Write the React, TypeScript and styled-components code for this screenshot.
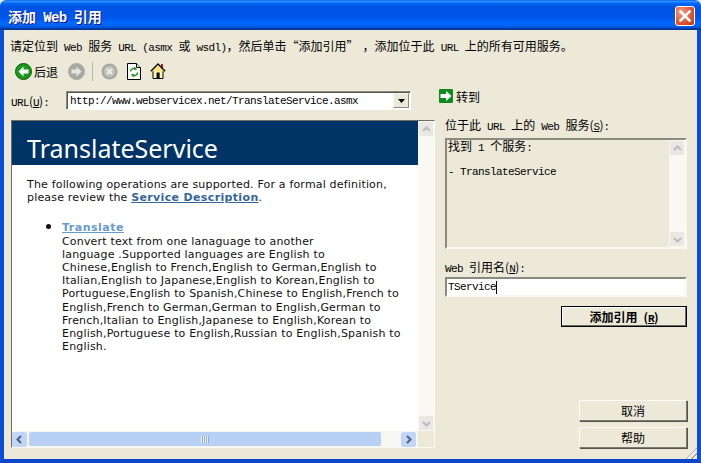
import styled, { createGlobalStyle } from "styled-components"

const GlobalStyle = createGlobalStyle`
    html, body {
        margin: 0;
        padding: 0;
        background: #ece9d8;
    }
    body {
        width: 701px;
        height: 463px;
        overflow: hidden;
        font-family: "Noto Sans CJK SC", "Liberation Sans", sans-serif;
        font-size: 12px;
        color: #000;
    }
`

export default function App() {
    return (
        <Window>
            <GlobalStyle />
            <TitleBar>
                <TitleText>添加 <Lat $size={14}>Web</Lat> 引用</TitleText>
                <CloseButton>
                    <svg width="14" height="14" viewBox="0 0 14 14">
                        <path d="M2.5 2.5 L11.5 11.5 M11.5 2.5 L2.5 11.5" stroke="#fff" strokeWidth="2.6" strokeLinecap="square" />
                    </svg>
                </CloseButton>
            </TitleBar>
            <Client>
                <Instruction>
                    请定位到 <Lat>Web</Lat> 服务 <Lat>URL (asmx</Lat> 或 <Lat>wsdl)</Lat>，然后单击“添加引用”<QuoteGap />，添加位于此 <Lat>URL</Lat> 上的所有可用服务。
                </Instruction>
                <Toolbar>
                    <ToolButton $width={53}>
                        <RoundIcon fill="#1b9a1b" dir="left" />
                        <ToolLabel>后退</ToolLabel>
                    </ToolButton>
                    <ToolButton $width={24}>
                        <RoundIcon fill="#a9a9a3" dir="right" />
                    </ToolButton>
                    <ToolSep />
                    <ToolButton $width={26}>
                        <svg width="17" height="17" viewBox="0 0 17 17">
                            <circle cx="8.5" cy="8.5" r="8" fill="#a9a9a3" />
                            <circle cx="8.5" cy="8.5" r="5.5" fill="#c4c3bc" />
                            <path d="M6 6 L11 11 M11 6 L6 11" stroke="#eeeee8" strokeWidth="2" />
                        </svg>
                    </ToolButton>
                    <ToolButton $width={23}>
                        <svg width="14" height="17" viewBox="0 0 14 17">
                            <path d="M.5 .5 H9.5 L13.5 4.5 V16.5 H.5 Z" fill="#fff" stroke="#000" />
                            <path d="M9.5 .5 V4.5 H13.5" fill="#e8e8e0" stroke="#000" />
                            <path d="M3.5 8.5 A3.4 3.4 0 0 1 8.2 5.6" fill="none" stroke="#1d9a1d" strokeWidth="1.6" />
                            <path d="M7.4 3.6 L10.2 6.4 L7 7.2 Z" fill="#1d9a1d" />
                            <path d="M10.5 9.5 A3.4 3.4 0 0 1 5.8 12.4" fill="none" stroke="#1d9a1d" strokeWidth="1.6" />
                            <path d="M6.6 14.4 L3.8 11.6 L7 10.8 Z" fill="#1d9a1d" />
                        </svg>
                    </ToolButton>
                    <ToolButton $width={23}>
                        <svg width="16" height="16" viewBox="0 0 16 16">
                            <rect x="11" y="1" width="2" height="4" fill="#b02020" />
                            <path d="M3 7 H13 V15.5 H3 Z" fill="#fff6b0" stroke="#000" />
                            <path d="M.8 8.2 L8 1 L15.2 8.2" fill="#f7e57a" stroke="#000" strokeWidth="1.3" />
                            <rect x="6.5" y="9.5" width="3.2" height="6" fill="#111" />
                        </svg>
                    </ToolButton>
                </Toolbar>
                <Main>
                    <LeftColumn>
                        <UrlRow>
                            <UrlLabel><Lat>URL</Lat>(<u><Lat>U</Lat></u>)<Lat>:</Lat></UrlLabel>
                            <Combo>
                                <Lat>http://www.webservicex.net/TranslateService.asmx</Lat>
                                <ComboArrow>
                                    <svg width="7" height="4" viewBox="0 0 7 4"><path d="M0 0 H7 L3.5 4 Z" fill="#000" /></svg>
                                </ComboArrow>
                            </Combo>
                        </UrlRow>
                        <BrowserPanel>
                            <BrowserTop>
                                <Page>
                                    <PageHeader>TranslateService</PageHeader>
                                    <PageBody>
                                        <p>
                                            The following operations are supported. For a formal definition,<br />
                                            please review the <PageLink href="#">Service Description</PageLink>.
                                        </p>
                                        <OpList>
                                            <li>
                                                <OpLink href="#">Translate</OpLink><br />
                                                Convert text from one lanaguage to another<br />
                                                language .Supported languages are English to<br />
                                                Chinese,English to French,English to German,English to<br />
                                                Italian,English to Japanese,English to Korean,English to<br />
                                                Portuguese,English to Spanish,Chinese to English,French to<br />
                                                English,French to German,German to English,German to<br />
                                                French,Italian to English,Japanese to English,Korean to<br />
                                                English,Portuguese to English,Russian to English,Spanish to<br />
                                                English.
                                            </li>
                                        </OpList>
                                    </PageBody>
                                </Page>
                                <VScroll>
                                    <ScrollEnd><Chevron dir="up" color="#b8bdc4" /></ScrollEnd>
                                    <ScrollEnd><Chevron dir="down" color="#b8bdc4" /></ScrollEnd>
                                </VScroll>
                            </BrowserTop>
                            <HScroll>
                                <HEnd><Chevron dir="left" color="#4d6185" /></HEnd>
                                <HThumb>
                                    <Grip />
                                </HThumb>
                                <HEnd><Chevron dir="right" color="#4d6185" /></HEnd>
                            </HScroll>
                        </BrowserPanel>
                    </LeftColumn>
                    <RightColumn>
                        <GoRow>
                            <svg width="14" height="14" viewBox="0 0 14 14">
                                <rect width="14" height="14" rx="1" fill="#0f8a1e" />
                                <path d="M1.5 5 H7 V2 L12.5 7 L7 12 V9 H1.5 Z" fill="#fff" />
                            </svg>
                            <span>转到</span>
                        </GoRow>
                        <FieldLabel $top={13}>位于此 <Lat>URL</Lat> 上的 <Lat>Web</Lat> 服务(<u><Lat>S</Lat></u>)<Lat>:</Lat></FieldLabel>
                        <ServiceList>
                            <ServiceText>
                                <ServiceLine>找到 <Lat>1</Lat> 个服务<Lat>:</Lat></ServiceLine>
                                <ServiceLine $top={12}><Lat>- TranslateService</Lat></ServiceLine>
                            </ServiceText>
                            <VScroll>
                                <ScrollEnd><Chevron dir="up" color="#b8bdc4" /></ScrollEnd>
                                <ScrollEnd><Chevron dir="down" color="#b8bdc4" /></ScrollEnd>
                            </VScroll>
                        </ServiceList>
                        <FieldLabel $top={10}><Lat>Web</Lat> 引用名(<u><Lat>N</Lat></u>)<Lat>:</Lat></FieldLabel>
                        <NameInput>
                            <Lat>TService</Lat><Caret />
                        </NameInput>
                        <DialogButton $width={126} $primary>添加引用 (<u><Lat>R</Lat></u>)</DialogButton>
                        <BottomButtons>
                            <DialogButton $width={108}>取消</DialogButton>
                            <DialogButton $width={108}>帮助</DialogButton>
                        </BottomButtons>
                    </RightColumn>
                </Main>
                <ResizeGrip />
            </Client>
        </Window>
    )
}

function RoundIcon({ fill, dir }: { fill: string; dir: "left" | "right" }) {
    const arrow = dir === "left"
        ? "M3.5 8.5 L8.5 3.5 V6.5 H13.5 V10.5 H8.5 V13.5 Z"
        : "M13.5 8.5 L8.5 3.5 V6.5 H3.5 V10.5 H8.5 V13.5 Z"
    return (
        <svg width="17" height="17" viewBox="0 0 17 17">
            <circle cx="8.5" cy="8.5" r="8" fill={fill} stroke={dir === "left" ? "#0b5a0b" : "#a9a9a3"} strokeWidth="1" />
            <path d={arrow} fill={dir === "left" ? "#fff" : "#e6e6e0"} />
        </svg>
    )
}

function Chevron({ dir, color }: { dir: "up" | "down" | "left" | "right"; color: string }) {
    const paths = {
        up: "M1 6 L4.5 2.5 L8 6",
        down: "M1 3 L4.5 6.5 L8 3",
        left: "M6 1 L2.5 4.5 L6 8",
        right: "M3 1 L6.5 4.5 L3 8",
    }
    return (
        <svg width="9" height="9" viewBox="0 0 9 9">
            <path d={paths[dir]} fill="none" stroke={color} strokeWidth="2" />
        </svg>
    )
}

const Window = styled.div`
    width: 701px;
    height: 463px;
    display: flex;
    flex-direction: column;
    background: #ece9d8;
    word-spacing: 3.4px;
`

const TitleBar = styled.div`
    height: 30px;
    flex: none;
    display: flex;
    align-items: center;
    justify-content: space-between;
    padding: 2px 6px 0 8px;
    box-sizing: border-box;
    border-radius: 6px 6px 0 0;
    background: linear-gradient(#0058ee, #3593ff 4%, #288eff 6%, #127dff 8%, #036ffc 10%, #0262ee 14%, #0057e5 20%, #0054e3 24%, #0055eb 56%, #005bf5 66%, #026afe 76%, #0062ef 86%, #0052d6 92%, #0040ab 94%, #003092 100%);
`

const TitleText = styled.div`
    color: #fff;
    font-weight: 700;
    font-size: 14px;
    word-spacing: 4px;
    text-shadow: 1px 1px 0 #0f1089;
`

const CloseButton = styled.div`
    width: 20px;
    height: 20px;
    box-sizing: border-box;
    display: flex;
    align-items: center;
    justify-content: center;
    border: 1px solid #fff;
    border-radius: 3px;
    background: radial-gradient(circle at 30% 30%, #f0a08a, #e2552f 55%, #c23a1a);
`

const Client = styled.div`
    flex: 1;
    min-height: 0;
    position: relative;
    display: flex;
    flex-direction: column;
    box-sizing: border-box;
    padding: 0 10px 11px 7px;
    border-left: 4px solid #0a4fd8;
    border-right: 4px solid #0a4fd8;
    border-bottom: 4px solid #0a46c8;
`

/* simsun-like half width latin: 6px per char at the default size */
const Lat = styled.span<{ $size?: number }>`
    font-family: "Liberation Mono", monospace;
    font-size: ${p => p.$size ?? 11}px;
    letter-spacing: -0.6px;
    word-spacing: 0;
`

const Instruction = styled.div`
    height: 16px;
    margin: 8px 0 0 -1px;
    line-height: 16px;
    white-space: nowrap;
    flex: none;
`

const QuoteGap = styled.span`
    display: inline-block;
    width: 4px;
`

const Toolbar = styled.div`
    height: 24px;
    margin-top: 5px;
    flex: none;
    display: flex;
    align-items: center;
    padding-left: 4px;
`

const ToolButton = styled.div<{ $width: number }>`
    width: ${p => p.$width}px;
    display: flex;
    align-items: center;
    gap: 2px;
`

const ToolLabel = styled.span`
    font-size: 12px;
`

const ToolSep = styled.div`
    width: 1px;
    height: 19px;
    background: #b8b5a6;
    margin-right: 8px;
`

const Main = styled.div`
    flex: 1;
    min-height: 0;
    margin-top: 4px;
    display: grid;
    grid-template-columns: 424px 242px;
    column-gap: 10px;
`

const LeftColumn = styled.div`
    display: flex;
    flex-direction: column;
    min-height: 0;
`

const UrlRow = styled.div`
    display: flex;
    align-items: center;
    height: 19px;
    margin-top: 4px;
    flex: none;
`

const UrlLabel = styled.div`
    width: 55px;
    white-space: nowrap;
`

const Combo = styled.div`
    width: 345px;
    height: 19px;
    box-sizing: border-box;
    display: flex;
    align-items: center;
    justify-content: space-between;
    background: #fff;
    border: 1px solid;
    border-color: #8b8a80 #fff #fff #8b8a80;
    box-shadow: inset 1px 1px 0 #55544c;
    padding-left: 3px;
`

const ComboArrow = styled.div`
    width: 16px;
    height: 15px;
    margin-right: 1px;
    display: flex;
    align-items: center;
    justify-content: center;
    background: #ece9d8;
    border: 1px solid;
    border-color: #f8f7f0 #8b8a80 #8b8a80 #f8f7f0;
    box-sizing: border-box;
`

const BrowserPanel = styled.div`
    margin-top: 10px;
    flex: 1;
    min-height: 0;
    display: flex;
    flex-direction: column;
    box-sizing: border-box;
    background: #ece9d8;
    border: 1px solid;
    border-color: #716f64 #fbfaf5 #fbfaf5 #716f64;
`

const BrowserTop = styled.div`
    flex: 1;
    min-height: 0;
    display: flex;
`

const Page = styled.div`
    flex: 1;
    min-width: 0;
    background: #fff;
    font-family: "DejaVu Sans", Verdana, sans-serif;
    font-size: 11px;
    line-height: 13.2px;
    letter-spacing: 0.18px;
    word-spacing: 0;
    color: #111;
`

const PageHeader = styled.div`
    height: 44px;
    background: #003366;
    color: #fff;
    font-family: "Noto Sans", "Open Sans", sans-serif;
    font-size: 25px;
    letter-spacing: 0;
    line-height: 54px;
    padding-left: 15px;
    overflow: hidden;
`

const PageBody = styled.div`
    padding: 13px 0 0 15px;
    white-space: nowrap;

    p {
        margin: 0;
    }
`

const PageLink = styled.a`
    color: #336699;
    font-weight: 700;
    letter-spacing: 0.35px;
`

const OpLink = styled.a`
    color: #6699cc;
    font-weight: 700;
    letter-spacing: 0.5px;
`

const OpList = styled.ul`
    margin: 16px 0 0;
    padding-left: 35px;

    li::marker {
        font-size: 15px;
    }
`

const VScroll = styled.div`
    width: 16px;
    flex: none;
    display: flex;
    flex-direction: column;
    justify-content: space-between;
    background: #f9f8f3;
`

const ScrollEnd = styled.div`
    height: 16px;
    box-sizing: border-box;
    display: flex;
    align-items: center;
    justify-content: center;
    background: #e9e8e2;
    border: 1px solid #f7f7f3;
    border-radius: 2px;
`

const HScroll = styled.div`
    height: 16px;
    flex: none;
    display: flex;
    align-items: center;
    gap: 1px;
    margin-right: 16px;
    background: #f7f7f2;
`

const HEnd = styled.div`
    width: 15px;
    height: 15px;
    flex: none;
    display: flex;
    align-items: center;
    justify-content: center;
    border-radius: 2px;
    background: #c3d5f7;
`

const HThumb = styled.div`
    width: 352px;
    height: 14px;
    margin: 0 19px 0 1px;
    display: flex;
    align-items: center;
    justify-content: center;
    border-radius: 2px;
    background: #b8cff6;
`

const Grip = styled.div`
    width: 8px;
    height: 7px;
    background: repeating-linear-gradient(90deg, #eef3fd 0 1px, #8fabe0 1px 2px);
`

const RightColumn = styled.div`
    display: flex;
    flex-direction: column;
    align-items: stretch;
    min-height: 0;
`

const GoRow = styled.div`
    display: flex;
    align-items: center;
    gap: 3px;
    height: 16px;
    margin-top: 1px;
    margin-left: -6px;
`

const FieldLabel = styled.div<{ $top: number }>`
    margin-top: ${p => p.$top}px;
    height: 16px;
    line-height: 16px;
    white-space: nowrap;
`

const ServiceList = styled.div`
    height: 111px;
    margin-top: 5px;
    box-sizing: border-box;
    display: flex;
    justify-content: space-between;
    background: #ece9d8;
    border: 2px solid;
    border-color: #8b8a80 #f8f7f0 #f8f7f0 #8b8a80;
`

const ServiceText = styled.div`
    padding-left: 1px;
`

const ServiceLine = styled.div<{ $top?: number }>`
    height: 12px;
    line-height: 12px;
    margin-top: ${p => p.$top ?? 0}px;
`

const NameInput = styled.div`
    height: 20px;
    margin-top: 2px;
    box-sizing: border-box;
    display: flex;
    align-items: center;
    background: #fff;
    border: 2px solid;
    border-color: #8b8a80 #f8f7f0 #f8f7f0 #8b8a80;
    padding-left: 1px;
`

const Caret = styled.span`
    width: 1px;
    height: 13px;
    background: #000;
`

const DialogButton = styled.div<{ $width: number; $primary?: boolean }>`
    width: ${p => p.$width}px;
    height: 21px;
    box-sizing: border-box;
    align-self: flex-end;
    display: flex;
    align-items: center;
    justify-content: center;
    white-space: pre;
    background: #ece9d8;
    font-weight: ${p => (p.$primary ? 700 : 400)};
    margin-top: ${p => (p.$primary ? 9 : 0)}px;
    border: 1px solid;
    border-color: ${p => (p.$primary ? "#000" : "#fdfcf8 #7c7b70 #7c7b70 #fdfcf8")};
    box-shadow: ${p => (p.$primary ? "inset -1px -1px 0 #6f6e64, inset 1px 1px 0 #fff" : "1px 1px 0 #55544c")};
`

const BottomButtons = styled.div`
    margin-top: auto;
    display: flex;
    flex-direction: column;
    align-items: flex-end;
    gap: 6px;
`

const ResizeGrip = styled.div`
    position: absolute;
    right: 0;
    bottom: 0;
    width: 13px;
    height: 13px;
    background: repeating-linear-gradient(135deg, transparent 0 2px, #a9a798 2px 3px, #fff 3px 4px);
    clip-path: polygon(100% 0, 100% 100%, 0 100%);
`
